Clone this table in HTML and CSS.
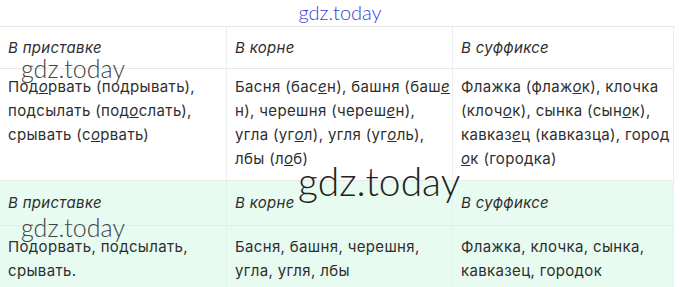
FILE: index.html
```html
<!DOCTYPE html>
<html lang="ru">
<head>
<meta charset="utf-8">
<link rel="stylesheet" href="styles.css">
</head>
<body>
<div class="page">
  <div class="brand">gdz.today</div>
  <div class="grid">
    <div class="cell head">В приставке</div>
    <div class="cell head">В корне</div>
    <div class="cell head">В суффиксе</div>
    <div class="cell body">Под<u>о</u>рвать (подрывать),<br>подсылать (под<u>о</u>слать),<br>срывать (с<u>о</u>рвать)</div>
    <div class="cell body">Басня (бас<u>е</u>н), башня (баш<u>е</u><br>н), черешня (череш<u>е</u>н),<br>угла (уг<u>о</u>л), угля (уг<u>о</u>ль),<br>лбы (л<u>о</u>б)</div>
    <div class="cell body">Флажка (флаж<u>о</u>к), клочка<br>(клоч<u>о</u>к), сынка (сын<u>о</u>к),<br>кавказ<u>е</u>ц (кавказца), город<br><u>о</u>к (городка)</div>
    <div class="cell head green">В приставке</div>
    <div class="cell head green">В корне</div>
    <div class="cell head green">В суффиксе</div>
    <div class="cell body green">Подорвать, подсылать,<br>срывать.</div>
    <div class="cell body green">Басня, башня, черешня,<br>угла, угля, лбы</div>
    <div class="cell body green">Флажка, клочка, сынка,<br>кавказец, городок</div>
  </div>
  <div class="wm wm1">gdz.today</div>
  <div class="wm wm2">gdz.today</div>
  <div class="wm wm3">gdz.today</div>
</div>
</body>
</html>
```
FILE: styles.css
```css
html, body {
  margin: 0;
  padding: 0;
  background: #fff;
}
.page {
  position: relative;
  width: 680px;
  height: 287px;
  overflow: hidden;
  font-family: Inter, "Noto Sans", sans-serif;
  color: #2e2e2e;
}
.brand {
  height: 26px;
  line-height: 24px;
  text-align: center;
  font-family: Lato, sans-serif;
  font-weight: 300;
  font-size: 20px;
  color: #3c3cdc;
}
.grid {
  display: grid;
  grid-template-columns: 226px 226px 221px;
  width: 673px;
  border-top: 1px solid #e6e6e6;
  border-right: 1px solid #ececf2;
}
.cell {
  font-size: 15px;
  letter-spacing: 0.35px;
  line-height: 24px;
  padding: 0 8px;
  white-space: nowrap;
  border-bottom: 1px solid #e8e8e8;
  border-left: 1px solid #eeeeee;
}
.cell:nth-child(3n+1) {
  border-left: none;
}
.head {
  font-style: italic;
  height: 41px;
  display: flex;
  align-items: center;
  letter-spacing: 0.3px;
}
.body {
  height: 96px;
  padding-top: 6px;
  padding-bottom: 9px;
}
.body u {
  font-style: italic;
}
.green {
  background: #e7fbf1;
  border-left-color: #e2f3ea;
  border-bottom-color: #dcefe4;
}
.head.green {
  height: 44px;
}
.body.green {
  height: auto;
  padding-top: 9px;
}
.wm {
  position: absolute;
  font-family: Lato, sans-serif;
  font-weight: 300;
  white-space: nowrap;
}
.wm1 {
  left: 21px;
  top: 53px;
  font-size: 25px;
  color: #444;
}
.wm2 {
  left: 298px;
  top: 158px;
  font-size: 39px;
  color: #222;
}
.wm3 {
  left: 21px;
  top: 212px;
  font-size: 25px;
  color: #444;
}
```
